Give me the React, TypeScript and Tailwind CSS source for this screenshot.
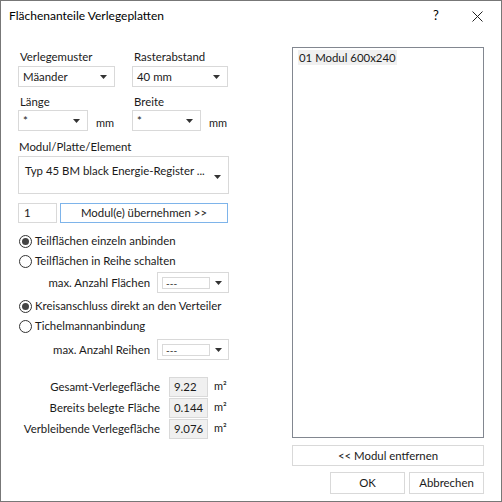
import React from "react";

const font = { fontFamily: "Lato, 'Open Sans', sans-serif" };

function Arrow() {
  return (
    <svg width="7" height="4" viewBox="0 0 7 4" className="shrink-0">
      <path d="M0 0 H7 L3.5 4 Z" fill="#333" />
    </svg>
  );
}

function Combo({ value, w, h = "h-[21px]" }: { value: string; w: string; h?: string }) {
  return (
    <div className={`${w} ${h} border border-[#d9d9d9] bg-white flex items-center justify-between pl-[4px] pr-[7px] text-[#1a1a1a]`}>
      <span>{value}</span>
      <Arrow />
    </div>
  );
}

function Radio({ checked, label }: { checked?: boolean; label: string }) {
  return (
    <div className="h-[20px] flex items-center gap-[3px] pl-[1px] text-[#1a1a1a] whitespace-nowrap">
      <div className="w-[13px] h-[13px] rounded-full border border-[#333] bg-white flex items-center justify-center">
        {checked && <div className="w-[7px] h-[7px] rounded-full bg-[#444]" />}
      </div>
      <span>{label}</span>
    </div>
  );
}

function SmallCombo() {
  return (
    <div className="w-[72px] h-[21px] border border-[#d9d9d9] bg-white flex items-center pl-[4px] pr-[6px] justify-between">
      <div className="w-[48px] h-[12px] border border-[#d9d9d9] flex items-center pl-[3px] text-[10px] leading-none text-[#1a1a1a]">
        ---
      </div>
      <Arrow />
    </div>
  );
}

function ValueRow({ label, value }: { label: string; value: string }) {
  return (
    <div className="h-[21px] flex items-center text-[#1a1a1a] whitespace-nowrap">
      <span className="w-[142px] text-right">{label}</span>
      <div className="ml-[9px] w-[39px] h-[20px] border border-[#d9d9d9] bg-[#f0f0f0] flex items-center pl-[4px]">
        {value}
      </div>
      <span className="ml-[6px] text-[11px]">m²</span>
    </div>
  );
}

export default function App() {
  return (
    <div style={font} className="w-[502px] h-[502px] border border-[#777] bg-white flex flex-col text-[11.4px]">
      <div className="h-[30px] flex items-center pl-[8px] text-[12px] text-black">
        <span className="flex-1">Flächenanteile Verlegeplatten</span>
        <span className="w-[12px] text-[13px]">?</span>
        <div className="w-[44px] flex justify-center pl-[20px]">
          <svg width="11" height="11" viewBox="0 0 11 11">
            <path d="M0.5 0.5 L10.5 10.5 M10.5 0.5 L0.5 10.5" stroke="#222" strokeWidth="1" />
          </svg>
        </div>
        <span className="w-[12px]" />
      </div>

      <div className="flex flex-1">
        {/* left column */}
        <div className="w-[291px] flex-none pl-[17px] pt-[17px] flex flex-col text-[#1a1a1a]">
          <div className="flex">
            <div className="w-[114px] flex flex-col">
              <span className="h-[18px] pl-[2px]">Verlegemuster</span>
              <Combo value="Mäander" w="w-[97px]" />
            </div>
            <div className="flex flex-col">
              <span className="h-[18px] pl-[2px]">Rasterabstand</span>
              <Combo value="40 mm" w="w-[96px]" />
            </div>
          </div>

          <div className="flex mt-[6px]">
            <div className="w-[114px] flex flex-col">
              <span className="h-[17px] pl-[2px]">Länge</span>
              <div className="flex items-end gap-[8px]">
                <Combo value="*" w="w-[70px]" />
                <span className="text-[11px]">mm</span>
              </div>
            </div>
            <div className="flex flex-col">
              <span className="h-[17px] pl-[2px]">Breite</span>
              <div className="flex items-end gap-[8px]">
                <Combo value="*" w="w-[69px]" />
                <span className="text-[11px]">mm</span>
              </div>
            </div>
          </div>

          <span className="h-[18px] mt-[7px] pl-[1px]">Modul/Platte/Element</span>
          <div className="w-[211px] h-[38px] border border-[#d9d9d9] flex justify-between pl-[6px] pr-[7px]">
            <span className="pt-[5px] whitespace-nowrap">Typ 45 BM black Energie-Register ...</span>
            <div className="pt-[18px]"><Arrow /></div>
          </div>

          <div className="flex gap-[3px] mt-[9px]">
            <div className="w-[39px] h-[20px] border border-[#d9d9d9] flex items-center pl-[5px]">1</div>
            <div className="w-[168px] h-[20px] border border-[#7eb4ea] flex items-center justify-center">
              Modul(e) übernehmen &gt;&gt;
            </div>
          </div>

          <div className="mt-[8px] flex flex-col">
            <Radio checked label="Teilflächen einzeln anbinden" />
            <Radio label="Teilflächen in Reihe schalten" />
            <div className="flex items-center justify-end w-[211px] gap-[7px] mt-[1px]">
              <span>max. Anzahl Flächen</span>
              <SmallCombo />
            </div>
            <div className="mt-[3px]">
              <Radio checked label="Kreisanschluss direkt an den Verteiler" />
              <Radio label="Tichelmannanbindung" />
            </div>
            <div className="flex items-center justify-end w-[211px] gap-[7px] mt-[3px]">
              <span>max. Anzahl Reihen</span>
              <SmallCombo />
            </div>
          </div>

          <div className="mt-[16px] flex flex-col">
            <ValueRow label="Gesamt-Verlegefläche" value="9.22" />
            <ValueRow label="Bereits belegte Fläche" value="0.144" />
            <ValueRow label="Verbleibende Verlegefläche" value="9.076" />
          </div>
        </div>

        {/* right column */}
        <div className="w-[192px] flex-none pt-[16px] flex flex-col text-[#1a1a1a]">
          <div className="h-[391px] border border-[#828790] p-[1px] pl-[5px]">
            <div className="inline-block bg-[#f0f0f0] px-[1px] leading-[15px]">01 Modul 600x240</div>
          </div>
          <div className="mt-[7px] h-[21px] border border-[#d9d9d9] flex items-center justify-center">
            &lt;&lt; Modul entfernen
          </div>
          <div className="mt-[6px] flex justify-end gap-[4px]">
            <div className="w-[75px] h-[22px] border border-[#d9d9d9] flex items-center justify-center">OK</div>
            <div className="w-[75px] h-[22px] border border-[#d9d9d9] flex items-center justify-center">Abbrechen</div>
          </div>
        </div>
      </div>
    </div>
  );
}
